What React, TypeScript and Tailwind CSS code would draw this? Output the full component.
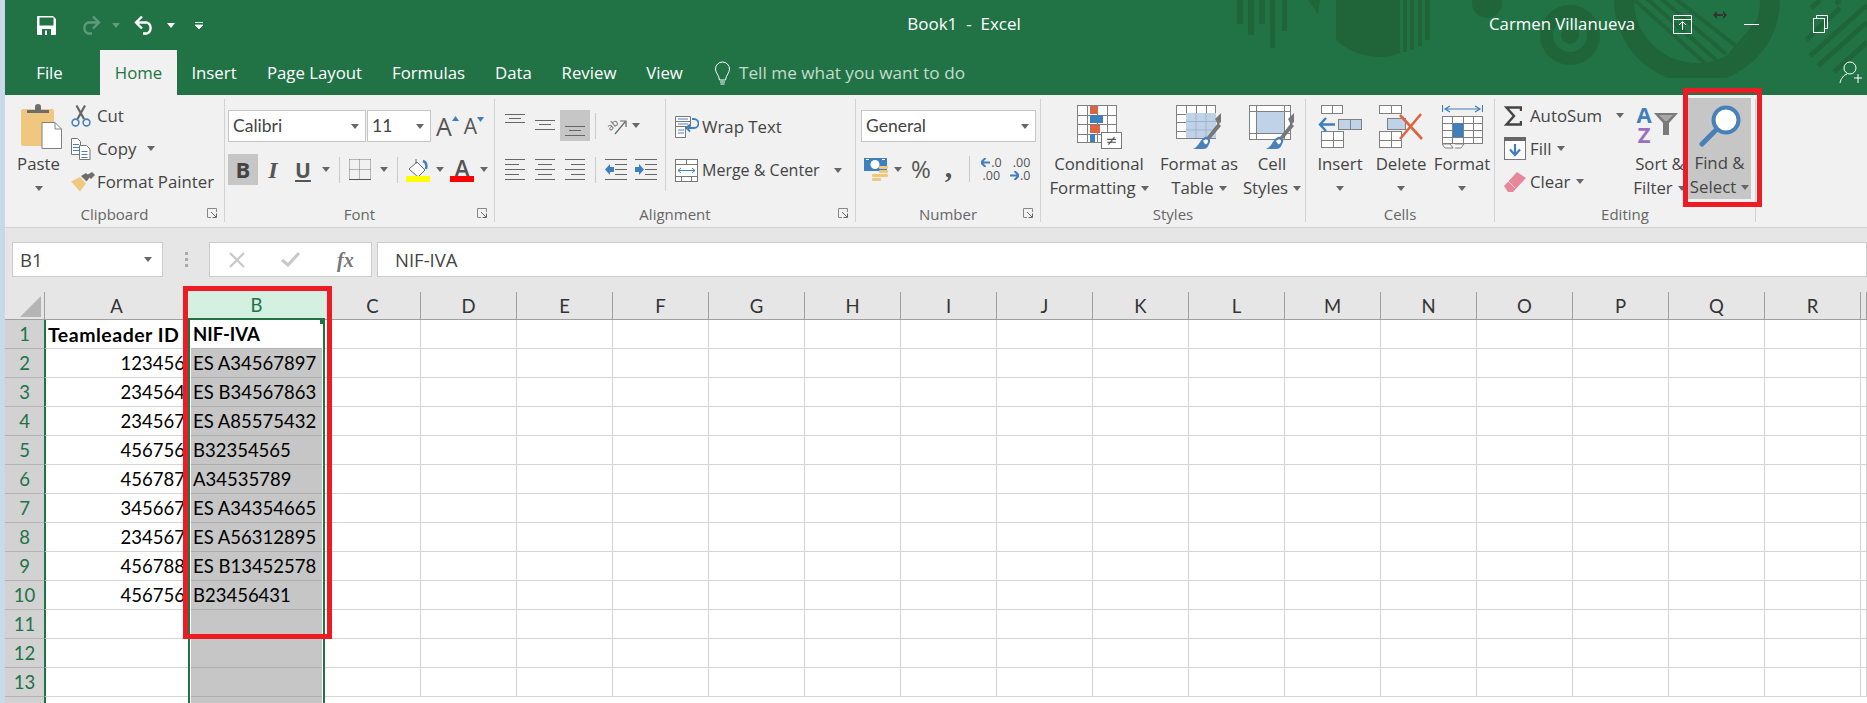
import type { ReactNode } from "react";

const GREEN = "#217346";

const Caret = ({ className = "" }: { className?: string }) => (
  <svg width="8" height="5" viewBox="0 0 8 5" className={`shrink-0 ${className}`}>
    <path d="M0 0h8L4 5z" fill="#666" />
  </svg>
);

const Launcher = () => (
  <svg width="10" height="10" viewBox="0 0 10 10" className="absolute right-[7px] top-[3px]">
    <path d="M9.5 4V.5H.5v9H4" fill="none" stroke="#888" />
    <path d="M4 4l5 5M9.5 5.5v4h-4" fill="none" stroke="#666" />
  </svg>
);

const Group = ({
  label,
  className,
  launcher,
  children,
}: {
  label: string;
  className: string;
  launcher?: boolean;
  children: ReactNode;
}) => (
  <div className={`my-[4px] flex h-[123px] shrink-0 flex-col border-r border-[#d2d2d2] ${className}`}>
    <div className="flex h-[106px] shrink-0">{children}</div>
    <div className="relative flex h-[17px] items-center justify-center pt-[2px] text-[15px] text-[#666]">
      {label}
      {launcher && <Launcher />}
    </div>
  </div>
);

const BigButton = ({
  icon,
  line1,
  line2,
  className = "",
}: {
  icon: ReactNode;
  line1: string;
  line2?: string;
  className?: string;
}) => (
  <div className={`flex shrink-0 flex-col items-center ${className}`}>
    <div className="flex h-[53px] items-center justify-center pt-[2px]">{icon}</div>
    <div className="h-[24px] whitespace-nowrap leading-[24px]">{line1}</div>
    <div className="flex h-[24px] items-center gap-[5px] whitespace-nowrap leading-[24px]">
      {line2}
      <Caret />
    </div>
  </div>
);

const SmallRow = ({ icon, children }: { icon: ReactNode; children: ReactNode }) => (
  <div className="flex h-[33px] items-center whitespace-nowrap">
    <div className="flex w-[26px] shrink-0 items-center">{icon}</div>
    {children}
  </div>
);

const Lines = ({ rows, h = 21 }: { rows: number[][]; h?: number }) => (
  <svg width="20" height={h} viewBox={`0 0 20 ${h}`} className="shrink-0">
    {rows.map(([x1, x2, y]) => (
      <path key={`${x1}-${y}`} d={`M${x1} ${y + 0.5}H${x2}`} stroke="#666" />
    ))}
  </svg>
);

const Sep = () => <div className="h-[26px] w-px shrink-0 bg-[#c8c8c8]" />;

const GridBox = ({ w, h, cols, rows }: { w: number; h: number; cols: number; rows: number }) => (
  <>
    <rect x="0.5" y="0.5" width={w - 1} height={h - 1} fill="#fff" stroke="#808080" />
    {Array.from({ length: cols - 1 }, (_, i) => (
      <path key={`c${i}`} d={`M${(((i + 1) * w) / cols).toFixed(0)}.5 0V${h}`} stroke="#808080" />
    ))}
    {Array.from({ length: rows - 1 }, (_, i) => (
      <path key={`r${i}`} d={`M0 ${(((i + 1) * h) / rows).toFixed(0)}.5H${w}`} stroke="#808080" />
    ))}
  </>
);

const SaveIcon = () => (
  <svg width="19" height="19" viewBox="0 0 19 19">
    <path d="M1 0h15l3 3v15a1 1 0 0 1-1 1H1a1 1 0 0 1-1-1V1a1 1 0 0 1 1-1z" fill="#fff" />
    <rect x="2.5" y="1.5" width="14" height="8" fill={GREEN} />
    <rect x="5" y="13" width="9" height="6" fill={GREEN} />
    <rect x="8" y="14.5" width="2" height="4.5" fill="#fff" />
  </svg>
);

const UndoIcon = ({ color, flip }: { color: string; flip?: boolean }) => (
  <svg width="22" height="20" viewBox="0 0 22 20" className={flip ? "-scale-x-100" : ""}>
    <path d="M8 1.5L2 7.5l6 6" fill="none" stroke={color} strokeWidth="2.4" />
    <path d="M2.5 7.5H13a6 6 0 0 1 0 11H9" fill="none" stroke={color} strokeWidth="2.4" />
  </svg>
);

const TitlePattern = () => (
  <svg viewBox="1180 0 687 95" className="absolute right-0 top-0 h-[95px] w-[687px]">
    <defs>
      <clipPath id="ringCut">
        <rect x="1600" y="0" width="200" height="78" />
      </clipPath>
      <clipPath id="ringIn">
        <circle cx="1697" cy="0" r="64" />
      </clipPath>
    </defs>
    <g fill="#1f6539">
      <rect x="1237" y="0" width="6" height="24" />
      <rect x="1248" y="0" width="6" height="35" />
      <rect x="1259" y="0" width="6" height="24" />
      <rect x="1270" y="0" width="5" height="48" />
      <rect x="1282" y="0" width="5" height="31" />
      <path d="M1308 0h12l-2 14zM1336 0h64v53q-10 4-18 4-28 0-46-17z" />
      <path d="M1403 0h4v52h-4zM1410 0h4v50h-4zM1418 0h4v46h-4zM1425 0h5v40h-5z" />
      <circle cx="1487" cy="3" r="15" />
      <circle cx="1570" cy="35" r="30" />
    </g>
    <circle cx="1570" cy="35" r="17" fill={GREEN} />
    <circle cx="1570" cy="35" r="9" fill="#1f6539" />
    <g clipPath="url(#ringCut)">
      <circle cx="1697" cy="0" r="73" fill="none" stroke="#1f6539" strokeWidth="20" />
    </g>
    <g clipPath="url(#ringIn)" stroke="#1f6539" strokeWidth="4">
      <path d="M1630 -4L1706 64M1644 -4L1716 60M1658 -4L1726 54M1672 -4L1736 46M1768 10L1722 64M1776 18L1730 62" />
    </g>
    <path d="M1811 8L1820 0M1836 4L1840 0M1818 66L1867 22M1810 56L1867 5M1834 72L1867 42M1806 40L1840 8" stroke="#1f6539" strokeWidth="5" />
  </svg>
);

const PasteIcon = () => (
  <svg width="41" height="45" viewBox="0 0 41 45">
    <rect x="0" y="5" width="33" height="37" rx="2" fill="#f0c77f" />
    <path d="M8 9V6h8V3a3 3 0 0 1 6 0v3h8v3z" fill="#6d6d6d" transform="translate(-2 0)" />
    <path d="M21 18.5h13l6.5 6.5v19.5H21z" fill="#fff" stroke="#808080" />
    <path d="M34 18.5V25h6.5" fill="none" stroke="#808080" />
  </svg>
);

const CutIcon = () => (
  <svg width="20" height="22" viewBox="0 0 20 22">
    <path d="M14 0.5L6.5 14M5.5 0.5L13 14" stroke="#666" strokeWidth="2.2" />
    <circle cx="4.5" cy="17.5" r="3.4" fill="none" stroke="#4a80b8" strokeWidth="1.6" />
    <circle cx="15.5" cy="17.5" r="3.4" fill="none" stroke="#4a80b8" strokeWidth="1.6" />
  </svg>
);

const CopyIcon = () => (
  <svg width="20" height="22" viewBox="0 0 20 22">
    <path d="M.5.5h6l3 3v13h-9z" fill="#fff" stroke="#777" />
    <path d="M2 6.5h6M2 9.5h6M2 12.5h6" stroke="#4a80b8" />
    <path d="M8.5 7.5h7l3.5 3.5v10.5H8.5z" fill="#fff" stroke="#777" />
    <path d="M10.5 13.5h6M10.5 16.5h6M10.5 19.5h6" stroke="#4a80b8" />
  </svg>
);

const PainterIcon = () => (
  <svg width="24" height="20" viewBox="0 0 24 20">
    <path d="M0 9.5L9 5l6 6.5-6 8z" fill="#f0c77f" />
    <path d="M10 4l5-3 4 4-3.5 4.5z" fill="#6d6d6d" />
    <path d="M16 3l5-3 3 3-4 4z" fill="#6d6d6d" />
  </svg>
);

const BordersIcon = () => (
  <svg width="22" height="21" viewBox="0 0 22 21">
    <path d="M.5.5h21M.5 10.5h21M.5.5v20M10.5.5v20M21.5.5v20" fill="none" stroke="#777" strokeDasharray="1 1" />
    <path d="M0 20.5h22" stroke="#555" />
  </svg>
);

const FillColorIcon = () => (
  <svg width="24" height="24" viewBox="0 0 24 24">
    <path d="M10 1v5M3 11l8-7 8 8-7 7z" fill="#fff" stroke="#666" />
    <path d="M17 3c3 1 4 4 3 8" fill="none" stroke="#3f7fbb" strokeWidth="2.4" />
    <rect x="0" y="18" width="24" height="6" fill="#ffff00" />
  </svg>
);

const OrientationIcon = () => (
  <svg width="21" height="19" viewBox="0 0 21 19" className="overflow-visible">
    <g transform="rotate(-40 7 9)">
      <text x="1" y="12" fontSize="10" fill="#666" fontFamily="Open Sans, sans-serif">
        ab
      </text>
    </g>
    <path d="M9 18L19 6M14 5h6v6" fill="none" stroke="#666" strokeWidth="1.2" />
  </svg>
);

const IndentIcon = ({ right }: { right?: boolean }) => (
  <svg width="22" height="21" viewBox="0 0 22 21">
    <path d="M0 .5h22M10 5.5h12M10 10.5h12M10 15.5h12M0 20.5h22" stroke="#666" />
    <path d={right ? "M0 8h4V5l5 5.5-5 5.5v-3H0z" : "M9 8H5V5L0 10.5 5 16v-3h4z"} fill="#3f7fbb" />
  </svg>
);

const WrapIcon = () => (
  <svg width="24" height="22" viewBox="0 0 24 22">
    <path d="M.5.5h15v5H.5zM.5 5.5h15v5H.5zM.5 10.5h10v11H.5z" fill="#fff" stroke="#777" />
    <path d="M3 3h10M3 8h10M3 14h6M3 17h6" stroke="#4a80b8" />
    <path d="M17 3h2a3.5 3.5 0 0 1 0 9h-6" fill="none" stroke="#3f7fbb" strokeWidth="1.8" />
    <path d="M15 8.5l-3.5 3.5 3.5 3.5" fill="none" stroke="#3f7fbb" strokeWidth="1.8" />
  </svg>
);

const MergeIcon = () => (
  <svg width="23" height="23" viewBox="0 0 23 23">
    <rect x=".5" y=".5" width="22" height="22" fill="#fff" stroke="#777" />
    <path d="M0 5.5h23M0 17.5h23M11.5 0v5M6.5 18v5M16.5 18v5" stroke="#777" />
    <path d="M3 11.5h17M6 9l-3 2.5L6 14M17 9l3 2.5-3 2.5" fill="none" stroke="#3f7fbb" />
  </svg>
);

const AccountingIcon = () => (
  <svg width="24" height="23" viewBox="0 0 24 23">
    <rect x="0" y="0" width="23" height="13" fill="#3f7fbb" />
    <ellipse cx="11" cy="6.5" rx="4.5" ry="4.5" fill="#fff" />
    <path d="M2 1.5h3M18 1.5h3" stroke="#fff" />
    <rect x="15" y="8" width="9" height="3" rx="1" fill="#f0c77f" />
    <rect x="15" y="12" width="9" height="3" rx="1" fill="#f0c77f" />
    <rect x="15" y="16" width="9" height="3" rx="1" fill="#f0c77f" />
    <rect x="8" y="16" width="9" height="3" rx="1" fill="#f0c77f" />
    <rect x="8" y="20" width="9" height="3" rx="1" fill="#f0c77f" />
  </svg>
);

const Arrow = ({ left }: { left?: boolean }) => (
  <svg width="9" height="9" viewBox="0 0 9 9" className="shrink-0">
    <path d={left ? "M4.5 0L0 4.5 4.5 9M0 4.5h9" : "M4.5 0L9 4.5 4.5 9M9 4.5H0"} fill="none" stroke="#3f7fbb" strokeWidth="2" />
  </svg>
);

const CondIcon = () => (
  <svg width="45" height="44" viewBox="0 0 45 44">
    <GridBox w={40} h={38} cols={4} rows={4} />
    <rect x="13" y="1" width="8" height="8" fill="#dc6441" />
    <rect x="13" y="10" width="13" height="8" fill="#3f7fbb" />
    <rect x="13" y="20" width="10" height="8" fill="#dc6441" />
    <rect x="13" y="29" width="5" height="8" fill="#3f7fbb" />
    <rect x="24.5" y="27.5" width="20" height="16" fill="#fff" stroke="#777" />
    <text x="34.5" y="40" textAnchor="middle" fontSize="14" fill="#555" fontFamily="DejaVu Sans, sans-serif">
      ≠
    </text>
  </svg>
);

const Brush = () => (
  <>
    <path d="M31 32l11-14 3 3-11 13z" fill="#777" />
    <path d="M39 14l6-6v9l-3 3z" fill="#777" />
    <path d="M17 44c6-2 7-10 12-12 3-1 6 2 5 5-2 4-2 7-7 7z" fill="#4a80b8" />
    <path d="M27 36c2-2 5-2 5 0s-2 4-3 3" fill="#fff" />
  </>
);

const TableIcon = () => (
  <svg width="46" height="44" viewBox="0 0 46 44">
    <GridBox w={40} h={34} cols={4} rows={4} />
    <rect x="10" y="8" width="30" height="25" fill="#bfd2e8" />
    <path d="M20 8v25M30 8v25M10 16.5h30M10 25h30" stroke="#9fb4cc" />
    <Brush />
  </svg>
);

const CellStylesIcon = () => (
  <svg width="46" height="44" viewBox="0 0 46 44">
    <rect x=".5" y=".5" width="41" height="34" fill="#fff" stroke="#808080" />
    <path d="M0 6.5h42M0 28.5h42M7.5 0v35M35.5 0v35" stroke="#808080" />
    <rect x="8" y="7" width="27" height="21" fill="#bfd2e8" />
    <Brush />
  </svg>
);

const InsertIcon = () => (
  <svg width="44" height="44" viewBox="0 0 44 44">
    <g transform="translate(3 0)">
      <GridBox w={22} h={9} cols={2} rows={1} />
    </g>
    <g transform="translate(3 26)">
      <GridBox w={23} h={17} cols={2} rows={2} />
    </g>
    <rect x="20.5" y="14.5" width="23" height="10" fill="#bfd2e8" stroke="#808080" />
    <path d="M32.5 14v11" stroke="#808080" />
    <path d="M17 19.5H2M8 13l-6 6.5L8 26" fill="none" stroke="#3f7fbb" strokeWidth="2.4" />
  </svg>
);

const DeleteIcon = () => (
  <svg width="44" height="44" viewBox="0 0 44 44">
    <GridBox w={23} h={9} cols={2} rows={1} />
    <g transform="translate(0 26)">
      <GridBox w={23} h={17} cols={2} rows={2} />
    </g>
    <rect x="8.5" y="13.5" width="18" height="11" fill="#bfd2e8" stroke="#808080" />
    <path d="M21 10l22 24M42 9L21 34" stroke="#dc6441" strokeWidth="2.6" />
  </svg>
);

const FormatIcon = () => (
  <svg width="41" height="44" viewBox="0 0 41 44">
    <path d="M.5 0v7M40.5 0v7M3 4h35M8 1L3 4l5 3M33 1l5 3-5 3" fill="none" stroke="#3f7fbb" strokeWidth="1.2" />
    <g transform="translate(0 11)">
      <GridBox w={41} h={28} cols={4} rows={4} />
      <rect x="11" y="7" width="10" height="14" fill="#3f7fbb" />
    </g>
    <path d="M0 39h8l3 4H3zM13 39h9l-3 4h-6" fill="#fff" stroke="#808080" />
  </svg>
);

const SumIcon = () => (
  <svg width="18" height="20" viewBox="0 0 18 20">
    <path d="M17 5V1.5H2.5L10 10l-7.500 8.500H17V15" fill="none" stroke="#444" strokeWidth="2.4" />
  </svg>
);

const FillIcon = () => (
  <svg width="22" height="23" viewBox="0 0 22 23">
    <rect x=".5" y=".5" width="21" height="22" fill="#fff" stroke="#777" />
    <rect x="0" y="0" width="22" height="4" fill="#666" />
    <path d="M11 7v11M6 12.5l5 5.5 5-5.5" fill="none" stroke="#3f7fbb" strokeWidth="2.2" />
  </svg>
);

const ClearIcon = () => (
  <svg width="22" height="20" viewBox="0 0 22 20">
    <path d="M0 14L13 0l9 6L9 20H4z" fill="#e8879b" />
    <path d="M4 9l7 7" stroke="#f7d5dc" strokeWidth="1" />
  </svg>
);

const FunnelIcon = () => (
  <svg width="24" height="22" viewBox="0 0 24 22">
    <path d="M0 0h24L15 10v12H9V10z" fill="#7a7a7a" />
    <path d="M5 2h14L13 8h-2z" fill="#a8a8a8" />
  </svg>
);

const FindIcon = () => (
  <svg width="42" height="42" viewBox="0 0 42 42">
    <circle cx="27" cy="15" r="12.5" fill="#fff" stroke="#4a80b8" strokeWidth="4" />
    <path d="M17 25L3 39" stroke="#4a80b8" strokeWidth="5" strokeLinecap="round" />
  </svg>
);

const FontBox = ({ className, text }: { className: string; text: string }) => (
  <div className={`flex h-[32px] items-center justify-between border border-[#c6c6c6] bg-white pl-[4px] pr-[6px] pt-[1px] font-['Lato',sans-serif] text-[17.5px] text-[#444] ${className}`}>
    {text}
    <Caret />
  </div>
);

const Ribbon = () => (
  <div className="flex h-[132px] shrink-0 bg-[#f1f1f1] font-['Open_Sans',sans-serif] text-[16.8px] text-[#444]">
    <Group label="Clipboard" className="w-[220px]" launcher>
      <div className="flex w-[66px] shrink-0 flex-col items-center pl-[1px]">
        <div className="flex h-[50px] shrink-0 items-end pl-[5px]">
          <PasteIcon />
        </div>
        <div className="mt-[3px] h-[24px] leading-[24px]">Paste</div>
        <div className="flex h-[24px] items-center">
          <Caret />
        </div>
      </div>
      <div className="flex flex-col">
        <SmallRow icon={<CutIcon />}>Cut</SmallRow>
        <SmallRow icon={<CopyIcon />}>
          Copy
          <Caret className="ml-[11px]" />
        </SmallRow>
        <SmallRow icon={<PainterIcon />}>Format Painter</SmallRow>
      </div>
    </Group>

    <Group label="Font" className="w-[270px]" launcher>
      <div className="flex w-full flex-col pl-[3px]">
        <div className="mt-[11px] flex items-center">
          <FontBox className="w-[138px]" text="Calibri" />
          <FontBox className="ml-px w-[64px]" text="11" />
          <span className="ml-[5px] flex items-start text-[25px] leading-none text-[#555]">
            A
            <svg width="7" height="5" viewBox="0 0 7 5" className="mt-[2px]">
              <path d="M0 5h7L3.5 0z" fill="#3f7fbb" />
            </svg>
          </span>
          <span className="ml-[5px] flex items-start text-[21px] leading-none text-[#555]">
            A
            <svg width="7" height="5" viewBox="0 0 7 5" className="mt-[1px]">
              <path d="M0 0h7L3.5 5z" fill="#3f7fbb" />
            </svg>
          </span>
        </div>
        <div className="mt-[12px] flex h-[31px] items-center">
          <div className="flex h-[31px] w-[30px] items-center justify-center bg-[#c6c6c6] text-[22px] font-bold text-[#444]">B</div>
          <div className="w-[30px] text-center font-['Liberation_Serif',serif] text-[24px] font-bold italic text-[#555]">I</div>
          <div className="ml-[1px] w-[28px] text-center text-[21px] font-bold leading-[26px] text-[#555] underline underline-offset-2">U</div>
          <Caret className="ml-[5px]" />
          <div className="ml-[9px]"><Sep /></div>
          <div className="ml-[9px]"><BordersIcon /></div>
          <Caret className="ml-[9px]" />
          <div className="ml-[9px]"><Sep /></div>
          <div className="ml-[8px]"><FillColorIcon /></div>
          <Caret className="ml-[6px]" />
          <div className="ml-[6px] flex h-[24px] w-[24px] flex-col items-center">
            <span className="h-[18px] text-[23px] font-semibold leading-[20px] text-[#555]">A</span>
            <div className="mt-auto h-[6px] w-full bg-[#ff0000]" />
          </div>
          <Caret className="ml-[6px]" />
        </div>
      </div>
    </Group>

    <Group label="Alignment" className="w-[361px]" launcher>
      <div className="flex h-[92px] w-[171px] shrink-0 flex-col border-r border-[#d2d2d2] pl-[10px]">
        <div className="mt-[11px] flex h-[31px] items-center">
          <div className="h-full w-[20px]">
            <Lines h={31} rows={[[0, 20, 4], [4, 16, 8], [0, 20, 12]]} />
          </div>
          <div className="ml-[10px] h-full w-[20px]">
            <Lines h={31} rows={[[0, 20, 10], [4, 16, 14], [0, 20, 19]]} />
          </div>
          <div className="ml-[5px] flex h-[31px] w-[30px] justify-center bg-[#c6c6c6]">
            <Lines h={31} rows={[[0, 20, 16], [4, 16, 20], [0, 20, 25]]} />
          </div>
          <div className="ml-[5px]"><Sep /></div>
          <div className="ml-[10px]"><OrientationIcon /></div>
          <Caret className="ml-[5px]" />
        </div>
        <div className="mt-[13px] flex h-[31px] items-center">
          <Lines rows={[[0, 20, 0], [0, 14, 5], [0, 20, 10], [0, 14, 15], [0, 20, 20]]} />
          <div className="ml-[10px]">
            <Lines rows={[[0, 20, 0], [3, 17, 5], [0, 20, 10], [3, 17, 15], [0, 20, 20]]} />
          </div>
          <div className="ml-[10px]">
            <Lines rows={[[0, 20, 0], [6, 20, 5], [0, 20, 10], [6, 20, 15], [0, 20, 20]]} />
          </div>
          <div className="ml-[10px]"><Sep /></div>
          <div className="ml-[9px]"><IndentIcon /></div>
          <div className="ml-[8px]"><IndentIcon right /></div>
        </div>
      </div>
      <div className="flex flex-col whitespace-nowrap pl-[9px]">
        <div className="mt-[15px] flex h-[26px] items-center gap-[3px]">
          <WrapIcon />
          Wrap Text
        </div>
        <div className="mt-[17px] flex h-[26px] items-center gap-[4px] text-[16px]">
          <MergeIcon />
          Merge &amp; Center
          <Caret className="ml-[10px]" />
        </div>
      </div>
    </Group>

    <Group label="Number" className="w-[185px]" launcher>
      <div className="flex w-full flex-col pl-[5px]">
        <FontBox className="mt-[11px] w-[175px]" text="General" />
        <div className="mt-[14px] flex h-[26px] items-center">
          <div className="ml-[3px]"><AccountingIcon /></div>
          <Caret className="ml-[6px]" />
          <span className="ml-[9px] text-[24px] text-[#555]">%</span>
          <span className="ml-[14px] h-[26px] font-['Liberation_Serif',serif] text-[30px] font-bold leading-[22px] text-[#555]">,</span>
          <div className="ml-[17px]"><Sep /></div>
          <div className="ml-[8px] grid grid-cols-[26px_26px] text-[12.5px] leading-[13px] text-[#555]">
            <span className="flex items-center justify-center gap-px"><Arrow left />.0</span>
            <span className="text-right">.00</span>
            <span className="text-center">.00</span>
            <span className="flex items-center justify-end gap-px"><Arrow />.0</span>
          </div>
        </div>
      </div>
    </Group>

    <Group label="Styles" className="w-[265px]">
      <BigButton className="ml-[8px] w-[100px]" icon={<CondIcon />} line1="Conditional" line2="Formatting" />
      <BigButton className="ml-[6px] w-[88px]" icon={<TableIcon />} line1="Format as" line2="Table" />
      <BigButton className="w-[58px]" icon={<CellStylesIcon />} line1="Cell" line2="Styles" />
    </Group>

    <Group label="Cells" className="w-[189px]">
      <BigButton className="ml-[6px] w-[56px]" icon={<InsertIcon />} line1="Insert" />
      <BigButton className="ml-[3px] w-[60px]" icon={<DeleteIcon />} line1="Delete" />
      <BigButton className="w-[62px]" icon={<FormatIcon />} line1="Format" />
    </Group>

    <Group label="Editing" className="w-[261px]">
      <div className="flex w-[136px] shrink-0 flex-col pl-[9px]">
        <SmallRow icon={<SumIcon />}>
          AutoSum
          <Caret className="ml-[14px]" />
        </SmallRow>
        <SmallRow icon={<FillIcon />}>
          Fill
          <Caret className="ml-[6px]" />
        </SmallRow>
        <SmallRow icon={<ClearIcon />}>
          Clear
          <Caret className="ml-[6px]" />
        </SmallRow>
      </div>
      <BigButton
        className="w-[57px]"
        icon={
          <div className="-mt-[6px] flex items-center pr-[5px]">
            <div className="mr-[2px] flex flex-col items-center text-[22px] font-bold leading-[20px]">
              <span className="text-[#3f7fbb]">A</span>
              <span className="text-[#9b6fc0]">Z</span>
            </div>
            <FunnelIcon />
          </div>
        }
        line1="Sort &"
        line2="Filter"
      />
      <div className="-mt-px h-[101px] w-[63px] bg-[#c6c6c6]">
        <BigButton className="w-full" icon={<FindIcon />} line1="Find &" line2="Select" />
      </div>
    </Group>
  </div>
);

const FormulaBar = () => (
  <div className="flex h-[65px] shrink-0 border-t border-[#d2d2d2] bg-[#e6e6e6] pl-[7px] pt-[14px] font-['Open_Sans',sans-serif] text-[18.5px] text-[#444]">
    <div className="flex h-[35px] w-[151px] items-center justify-between border border-[#cdcdcd] bg-white pl-[7px] pr-[10px]">
      B1
      <Caret />
    </div>
    <div className="flex h-[35px] w-[46px] flex-col items-center justify-center gap-[3px]">
      <i className="h-[3px] w-[3px] bg-[#aaa]" />
      <i className="h-[3px] w-[3px] bg-[#aaa]" />
      <i className="h-[3px] w-[3px] bg-[#aaa]" />
    </div>
    <div className="flex h-[35px] w-[163px] items-center border border-[#cdcdcd] bg-white">
      <svg width="16" height="16" viewBox="0 0 16 16" className="ml-[19px]">
        <path d="M1 1l14 14M15 1L1 15" stroke="#c8c8c8" strokeWidth="2.2" />
      </svg>
      <svg width="19" height="15" viewBox="0 0 19 15" className="ml-[36px]">
        <path d="M1 8l6 5L18 1" fill="none" stroke="#c8c8c8" strokeWidth="3" />
      </svg>
      <span className="ml-[37px] font-['Liberation_Serif',serif] text-[20px] font-bold italic text-[#777]">fx</span>
    </div>
    <div className="ml-[5px] flex h-[35px] flex-1 items-center border border-[#cdcdcd] bg-white pl-[17px]">NIF-IVA</div>
  </div>
);

const letters = ["C", "D", "E", "F", "G", "H", "I", "J", "K", "L", "M", "N", "O", "P", "Q", "R", ""];
const data: [string, string][] = [
  ["Teamleader ID", "NIF-IVA"],
  ["123456", "ES A34567897"],
  ["234564", "ES B34567863"],
  ["234567", "ES A85575432"],
  ["456756", "B32354565"],
  ["456787", "A34535789"],
  ["345667", "ES A34354665"],
  ["234567", "ES A56312895"],
  ["456788", "ES B13452578"],
  ["456756", "B23456431"],
  ["", ""],
  ["", ""],
  ["", ""],
];

const Sheet = () => (
  <div className="grid flex-1 grid-cols-[39px_144px_137px_repeat(16,96px)_1fr] auto-rows-[29px] content-start overflow-hidden bg-white font-['Lato',sans-serif] text-[18.5px] text-black">
    <div className="relative h-[28px] border-b border-[#9f9f9f] bg-[#e6e6e6]">
      <svg width="21" height="21" viewBox="0 0 21 21" className="absolute bottom-[2px] right-[3px]">
        <path d="M21 0v21H0z" fill="#b5b5b5" />
      </svg>
    </div>
    <div className="flex h-[28px] items-center justify-center border-b border-l border-[#9f9f9f] bg-[#e6e6e6] pt-[2px] text-[#333]">A</div>
    <div className="flex h-[28px] items-center justify-center border-b-2 border-[#217346] bg-[#d3f0e0] pt-[2px] text-[#217346]">B</div>
    {letters.map((l) => (
      <div key={l || "end"} className="flex h-[28px] items-center justify-center border-b border-r border-[#9f9f9f] bg-[#e6e6e6] pt-[2px] text-[#333]">
        {l}
      </div>
    ))}
    {data.map(([a, b], i) => (
      <Row key={i} n={i + 1} a={a} b={b} />
    ))}
    <div className="-mt-px h-[29px] bg-[#d2d2d2]" />
    <div className="-mt-px h-[29px] border-l-2 border-[#217346]" />
    <div className="-mt-px h-[29px] border-x-2 border-[#217346] px-px">
      <div className="h-full bg-[#c6c6c6]" />
    </div>
  </div>
);

const Row = ({ n, a, b }: { n: number; a: string; b: string }) => (
  <>
    <div className="-mt-px flex h-[29px] items-center justify-center border-b border-[#b4b4b4] bg-[#d2d2d2] pt-[2px] text-[#217346]">{n}</div>
    <div className={`-mt-px flex h-[29px] items-center whitespace-nowrap border-b border-l-2 border-b-[#d4d4d4] border-l-[#217346] pt-[2px] ${n === 1 ? "pl-[2px] text-[19.5px] font-bold tracking-[0.5px]" : "justify-end pr-[3px]"}`}>
      {a}
    </div>
    <div className={`relative -mt-px h-[29px] border-x-2 border-[#217346] px-px ${n === 1 ? "font-bold" : ""}`}>
      <div className={`flex h-full items-center border-b pl-[2px] pt-[2px] ${n === 1 ? "border-[#b4b4b4] bg-white" : "border-[#aeaeae] bg-[#c6c6c6]"}`}>{b}</div>
      {n === 1 && <div className="absolute -right-[2px] -top-[1px] h-[5px] w-[5px] bg-[#217346]" />}
    </div>
    {letters.map((l) => (
      <div key={l || "end"} className="-mt-px h-[29px] border-b border-r border-[#d4d4d4]" />
    ))}
  </>
);

export default function App() {
  return (
    <div className="relative flex h-[703px] w-[1867px] overflow-hidden bg-[#c9d8ea]">
      <div className="w-[5px] shrink-0" />
      <div className="flex min-w-0 flex-1 flex-col">
        <div className="relative h-[95px] shrink-0 bg-[#217346] font-['Open_Sans',sans-serif] text-[16.8px] text-white">
          <TitlePattern />
          <div className="relative flex h-[50px] items-center">
            <div className="flex h-[48px] w-[855px] shrink-0 items-center pl-[32px]">
              <SaveIcon />
              <div className="ml-[23px]">
                <UndoIcon color="#5e9c7c" flip />
              </div>
              <svg width="8" height="5" viewBox="0 0 8 5" className="ml-[11px]">
                <path d="M0 0h8L4 5z" fill="#5e9c7c" />
              </svg>
              <div className="ml-[14px]">
                <UndoIcon color="#fff" />
              </div>
              <svg width="8" height="5" viewBox="0 0 8 5" className="ml-[11px]">
                <path d="M0 0h8L4 5z" fill="#fff" />
              </svg>
              <svg width="8" height="7" viewBox="0 0 8 7" className="ml-[20px]">
                <path d="M0 .5h8M0 3h8L4 7z" fill="#fff" stroke="#fff" strokeWidth=".8" />
              </svg>
            </div>
            <div className="-mt-[2px] w-[208px] shrink-0 whitespace-pre text-center text-[17px]">Book1  -  Excel</div>
            <div className="-mt-[2px] ml-[421px] w-[145px] shrink-0 whitespace-nowrap">Carmen Villanueva</div>
            <svg width="19" height="19" viewBox="0 0 19 19" className="-mt-[2px] ml-[39px]">
              <path d="M.5.5h18v18H.5zM0 4.5h19" fill="none" stroke="#fff" />
              <path d="M9.5 15V7M6 10l3.5-3.5L13 10" fill="none" stroke="#fff" />
            </svg>
            <svg width="14" height="8" viewBox="0 0 14 8" className="-mt-[20px] ml-[21px]">
              <path d="M0 4l4-4v8zM14 4l-4-4v8zM3 3h8v2H3z" fill="#333" />
            </svg>
            <div className="-mt-[2px] ml-[17px] h-px w-[15px] bg-white" />
            <svg width="15" height="18" viewBox="0 0 15 18" className="-mt-[2px] ml-[54px]">
              <path d="M3.5 3.5V.5h11v13h-3" fill="none" stroke="#fff" />
              <rect x=".5" y="3.5" width="11" height="14" fill="none" stroke="#fff" />
            </svg>
          </div>
          <div className="relative flex h-[45px] items-center">
            <div className="w-[95px] pr-[6px] text-center">File</div>
            <div className="flex h-full w-[77px] items-center justify-center bg-[#f1f1f1] pt-[1px] text-[#217346]">Home</div>
            <div className="w-[74px] pt-[1px] text-center">Insert</div>
            <div className="w-[127px] pt-[1px] text-center">Page Layout</div>
            <div className="w-[101px] pt-[1px] text-center">Formulas</div>
            <div className="w-[69px] pt-[1px] text-center">Data</div>
            <div className="w-[82px] pt-[1px] text-center">Review</div>
            <div className="w-[69px] pt-[1px] text-center">View</div>
            <svg width="17" height="24" viewBox="0 0 17 24" className="ml-[15px]">
              <path d="M8.5 1a7 7 0 0 0-7 7c0 4 3.5 6 4 11h6c.5-5 4-7 4-11a7 7 0 0 0-7-7z" fill="none" stroke="#fff" />
              <path d="M6 21h5M6.5 23h4" stroke="#fff" />
            </svg>
            <span className="ml-[8px] pt-[1px] text-[17.2px] text-[#c4dccd]">Tell me what you want to do</span>
            <svg width="24" height="24" viewBox="0 0 24 24" className="ml-auto mr-[4px]">
              <circle cx="11" cy="7" r="6" fill="none" stroke="#fff" />
              <path d="M1 22c1-5 4-8 7-9M15 17h8M19 13v9" fill="none" stroke="#fff" />
            </svg>
          </div>
        </div>
        <Ribbon />
        <FormulaBar />
        <Sheet />
      </div>
      <div className="absolute left-[183px] top-[286px] h-[353px] w-[149px] border-[5px] border-[#ed1c24]" />
      <div className="absolute left-[1683px] top-[88px] h-[119px] w-[79px] border-[5px] border-[#ed1c24]" />
    </div>
  );
}
